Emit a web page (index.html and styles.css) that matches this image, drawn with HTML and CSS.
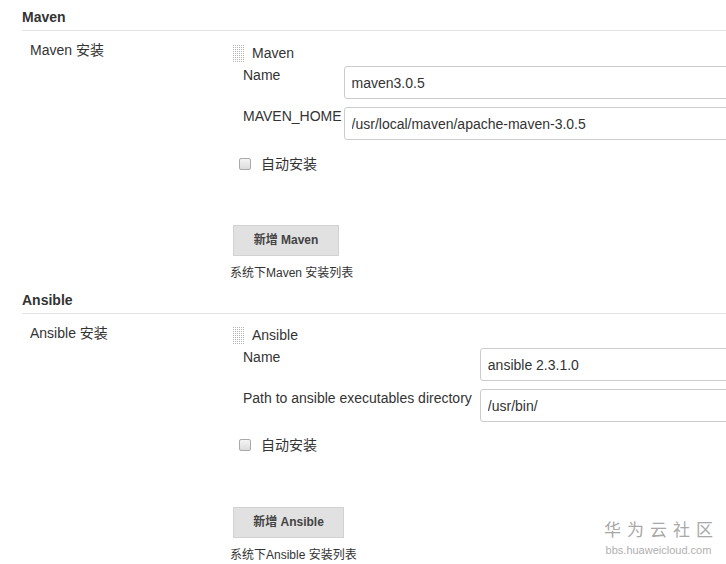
FILE: index.html
```html
<!DOCTYPE html>
<html lang="zh-CN">
 <head>
  <meta charset="UTF-8" />
  <meta name="viewport" content="width=device-width, initial-scale=1.0" />
  <title>全局工具配置</title>
  <link rel="stylesheet" href="styles.css">
 </head>
 <body>
  <!-- Maven -->
  <div class="section-title">Maven</div>
  <div class="row">
   <div class="row-label">Maven 安装</div>
   <div class="row-body">
    <div class="repeat-head">
     <svg class="handle" width="11" height="17" viewBox="0 0 11 17">
      <defs>
       <pattern id="dots1" width="2" height="2" patternUnits="userSpaceOnUse">
        <rect width="1" height="1" fill="#b4b4b4" />
       </pattern>
      </defs>
      <rect width="11" height="17" fill="url(#dots1)" />
     </svg>
     <span>Maven</span>
    </div>
    <table class="fields">
     <tr>
      <td class="field-label">Name</td>
      <td class="field-input"><input type="text" value="maven3.0.5" /></td>
     </tr>
     <tr>
      <td class="field-label">MAVEN_HOME</td>
      <td class="field-input"><input type="text" value="/usr/local/maven/apache-maven-3.0.5" /></td>
     </tr>
    </table>
    <div class="check-row">
     <span class="check"></span>
     <span>自动安装</span>
    </div>
    <div class="add-btn">新增 Maven</div>
    <p class="hint">系统下Maven 安装列表</p>
   </div>
  </div>

  <!-- Ansible -->
  <div class="section-title second">Ansible</div>
  <div class="row ansible">
   <div class="row-label">Ansible 安装</div>
   <div class="row-body">
    <div class="repeat-head">
     <svg class="handle" width="11" height="17" viewBox="0 0 11 17">
      <defs>
       <pattern id="dots2" width="2" height="2" patternUnits="userSpaceOnUse">
        <rect width="1" height="1" fill="#b4b4b4" />
       </pattern>
      </defs>
      <rect width="11" height="17" fill="url(#dots2)" />
     </svg>
     <span>Ansible</span>
    </div>
    <table class="fields">
     <tr>
      <td class="field-label">Name</td>
      <td class="field-input"><input type="text" value="ansible 2.3.1.0" /></td>
     </tr>
     <tr>
      <td class="field-label">Path to ansible executables directory</td>
      <td class="field-input"><input type="text" value="/usr/bin/" /></td>
     </tr>
    </table>
    <div class="check-row">
     <span class="check"></span>
     <span>自动安装</span>
    </div>
    <div class="add-btn">新增 Ansible</div>
    <p class="hint">系统下Ansible 安装列表</p>
   </div>
  </div>

  <!-- 水印 -->
  <div class="watermark">
   <div class="wm-title">华为云社区</div>
   <div class="wm-url">bbs.huaweicloud.com</div>
  </div>
 </body>
</html>
```

FILE: styles.css
```css
* {
 margin: 0;
 padding: 0;
 box-sizing: border-box;
}
html,
body {
 overflow: hidden;
}
body {
 width: 726px;
 height: 564px;
 position: relative;
 background-color: #fff;
 color: #333;
 font-family: "Liberation Sans", Arial, "Noto Sans CJK SC", sans-serif;
 font-size: 14px;
 line-height: 16px;
}
.section-title {
 margin-left: 22px;
 padding: 9px 0 5px;
 font-weight: bold;
 border-bottom: 1px solid #e3e3e3;
}
.section-title.second {
 margin-top: 3px;
}
.row {
 display: flex;
 margin-left: 22px;
}
.row-label {
 width: 211px;
 flex-shrink: 0;
 padding: 11px 0 0 8px;
}
.row-body {
 flex: 1;
 padding-top: 14px;
 margin-right: -20px;
}
.ansible .row-body {
 padding-top: 13px;
}
.repeat-head {
 display: flex;
 align-items: center;
 gap: 8px;
 height: 17px;
 line-height: 17px;
}
.handle {
 display: block;
}
.fields {
 margin: 4px 0 0 10px;
 width: calc(100% - 10px);
 border-collapse: collapse;
}
.fields td {
 padding: 0 0 8px;
 vertical-align: top;
}
.field-label {
 padding-top: 1px !important;
 padding-right: 2px !important;
 white-space: nowrap;
 width: 1%;
}
.ansible .field-label {
 padding-right: 8px !important;
}
.field-input input {
 display: block;
 width: 100%;
 height: 33px;
 padding: 0 7px;
 border: 1px solid #ccc;
 border-radius: 3px;
 background-color: #fff;
 color: #333;
 font-family: inherit;
 font-size: 14px;
 outline: none;
}
.check-row {
 display: flex;
 align-items: center;
 margin: 8px 0 0 6px;
 height: 16px;
}
.ansible .check-row {
 margin-top: 7px;
}
.check {
 width: 12px;
 height: 12px;
 margin-right: 10px;
 border: 1px solid #a9a9a9;
 border-radius: 2px;
 background: linear-gradient(#f4f4f4, #dcdcdc);
}
.add-btn {
 width: 106px;
 height: 31px;
 margin-top: 53px;
 line-height: 29px;
 text-align: center;
 border: 1px solid #d2d2d2;
 background-color: #e1e1e1;
 font-size: 12px;
 font-weight: bold;
 color: #444;
}
.ansible .add-btn {
 width: 111px;
 margin-top: 54px;
}
.hint {
 margin: 10px 0 0 -3px;
 font-size: 12px;
 line-height: 14px;
 color: #333;
}
.watermark {
 position: absolute;
 left: 604px;
 top: 521px;
 color: #a8a8a8;
 text-align: center;
}
.wm-title {
 font-size: 17px;
 line-height: 20px;
 letter-spacing: 6px;
 margin-right: -6px;
}
.wm-url {
 margin-top: 3px;
 font-size: 11px;
 line-height: 12px;
 color: #b0b0b0;
}
```
